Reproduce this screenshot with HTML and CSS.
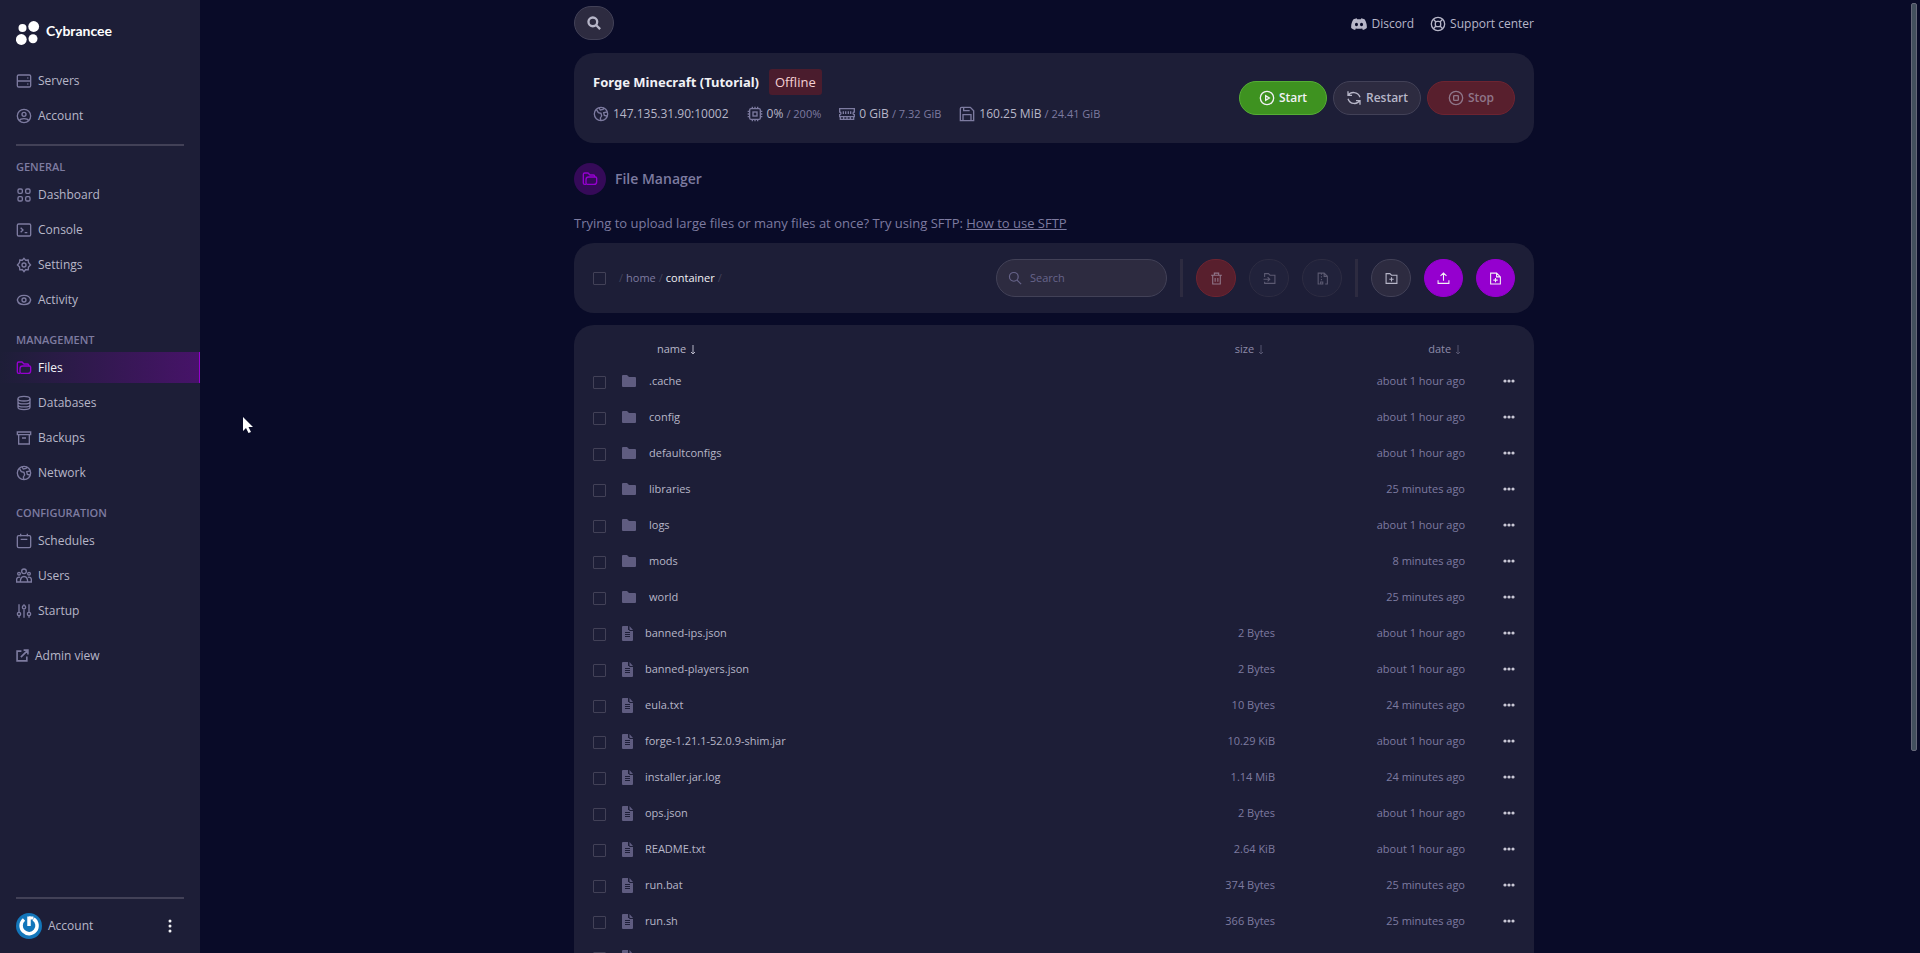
FILE: index.html
```html
<!DOCTYPE html>
<html lang="en">
<head>
<meta charset="utf-8">
<title>File Manager - Cybrancee</title>
<link rel="stylesheet" href="styles.css">
</head>
<body>
<svg class="sprite" aria-hidden="true">
  <symbol id="i-servers" viewBox="0 0 24 24"><rect x="2" y="3" width="20" height="18" rx="2"/><path d="M2 12h20M17 7.500h1.500M17 16.500h1.500"/></symbol>
  <symbol id="i-account" viewBox="0 0 24 24"><circle cx="12" cy="12" r="10"/><circle cx="12" cy="9.500" r="3"/><path d="M5 19c2-4 12-4 14 0"/></symbol>
  <symbol id="i-dashboard" viewBox="0 0 24 24"><rect x="3" y="3" width="6.500" height="6.500" rx="2"/><rect x="14.500" y="3" width="6.500" height="6.500" rx="2"/><rect x="3" y="14.500" width="6.500" height="6.500" rx="2"/><rect x="14.500" y="14.500" width="6.500" height="6.500" rx="2"/></symbol>
  <symbol id="i-console" viewBox="0 0 24 24"><rect x="2" y="3" width="20" height="18" rx="2"/><path d="M7 8.500l3.500 3.500L7 15.500M13 16h4"/></symbol>
  <symbol id="i-settings" viewBox="0 0 24 24"><path d="M12 2l2.500 2.800 3.800-.3.400 3.800L21.800 12l-3.100 3.200-.4 4-3.800-.4L12 22l-2.500-3.200-3.800.4-.4-4L2.200 12l3.100-3.700.4-3.800 3.800.3z"/><circle cx="12" cy="12" r="3"/></symbol>
  <symbol id="i-eye" viewBox="0 0 24 24"><path d="M2 12c2-9.300 18-9.300 20 0-2 9.300-18 9.300-20 0z"/><circle cx="12" cy="12" r="3"/></symbol>
  <symbol id="i-folders" viewBox="0 0 24 24"><path d="M6 20H4a2 2 0 0 1-2-2V5a2 2 0 0 1 2-2h5l3 3h5a2 2 0 0 1 2 2v1"/><path d="M6 18v-5a4 4 0 0 1 4-4h10a2 2 0 0 1 2 2v5a4 4 0 0 1-4 4H8a2 2 0 0 1-2-2z"/></symbol>
  <symbol id="i-database" viewBox="0 0 24 24"><ellipse cx="12" cy="5.500" rx="9" ry="3.500"/><path d="M3 5.500v13c0 4.500 18 4.500 18 0v-13M3 10c0 4.500 18 4.500 18 0M3 14.500c0 4.500 18 4.500 18 0"/></symbol>
  <symbol id="i-archive" viewBox="0 0 24 24"><path d="M2 3h20v4H2zM4 7v14h16V7M9 12h6"/></symbol>
  <symbol id="i-globe" viewBox="0 0 24 24"><circle cx="12" cy="12" r="10"/><path d="M5 5l3 5 4 1 1 4-2 3 1 4M9 3l2 3 4-1 2-2M21 9l-5 1 1 4 4 1"/></symbol>
  <symbol id="i-calendar" viewBox="0 0 24 24"><rect x="2" y="4" width="20" height="18" rx="2"/><path d="M7 1v4M17 1v4M7 9.500h10"/></symbol>
  <symbol id="i-users" viewBox="0 0 24 24"><circle cx="12" cy="5" r="3.500"/><circle cx="4.500" cy="8.500" r="2"/><circle cx="19.500" cy="8.500" r="2"/><path d="M6.500 21c0-11 11-11 11 0zM6.500 21H1v-4c0-2 2-4 5-3M17.500 21H23v-4c0-2-2-4-5-3"/></symbol>
  <symbol id="i-sliders" viewBox="0 0 24 24"><path d="M4.500 2v12M4.500 19v3M12 10v12M19.500 2v12M19.500 19v3M12 2v2"/><circle cx="4.500" cy="16.500" r="2.500"/><circle cx="12" cy="6.500" r="2.500"/><circle cx="19.500" cy="16.500" r="2.500"/></symbol>
  <symbol id="i-external" viewBox="0 0 24 24"><path d="M10 4H2v18h18v-8M9 15L21 3M14 2h8v8" stroke-width="3"/></symbol>
  <symbol id="i-search" viewBox="0 0 24 24"><circle cx="10" cy="10" r="7.500"/><path d="M15.500 15.500L22.500 22.500"/></symbol>
  <symbol id="i-discord" viewBox="0 0 24 24"><path fill="currentColor" stroke="none" fill-rule="evenodd" d="M8.500 3.500l.8 1.500c1.800-.3 3.600-.3 5.400 0l.8-1.500c1.700.3 3.300.8 4.800 1.500 2.700 4 3.800 8.500 3.400 13-1.800 1.400-3.700 2.300-5.800 3l-1.300-2.200 1.700-.9c-4 1.700-8.600 1.700-12.600 0l1.700.9L6.100 21c-2.100-.7-4-1.600-5.800-3-.4-4.500.7-9 3.400-13 1.500-.7 3.100-1.200 4.800-1.500zM8.200 10.200a2.300 2.500 0 1 0 0 5 2.300 2.500 0 0 0 0-5zm7.600 0a2.300 2.500 0 1 0 0 5 2.300 2.500 0 0 0 0-5z"/></symbol>
  <symbol id="i-support" viewBox="0 0 24 24"><circle cx="12" cy="12" r="10"/><rect x="8" y="8" width="8" height="8" rx="3"/><path d="M5 5l4 4M19 5l-4 4M5 19l4-4M19 19l-4-4"/></symbol>
  <symbol id="i-cpu" viewBox="0 0 24 24"><rect x="4" y="4" width="16" height="16" rx="2"/><rect x="9" y="9" width="6" height="6"/><path d="M8 1v3M12 1v3M16 1v3M8 20v3M12 20v3M16 20v3M1 8h3M1 12h3M1 16h3M20 8h3M20 12h3M20 16h3"/></symbol>
  <symbol id="i-ram" viewBox="0 0 24 24"><path d="M1 4h22v5a2 2 0 0 0 0 4v3H1v-3a2 2 0 0 0 0-4zM2 16v4h20v-4M6.500 8v4M10 8v4M14 8v4M17.500 8v4M7 17v3M12 17v3M17 17v3"/></symbol>
  <symbol id="i-disk" viewBox="0 0 24 24"><path d="M4 2h13l5 5v15H2V4a2 2 0 0 1 2-2zM7 2v5h9M6 22v-9h12v9"/></symbol>
  <symbol id="i-play" viewBox="0 0 24 24"><circle cx="12" cy="12" r="10"/><path d="M10 8.500v7l5.500-3.500z"/></symbol>
  <symbol id="i-restart" viewBox="0 0 24 24"><path d="M3 2v6h6M3.500 8c3.500-6 14.500-6 17.500 3M21 22v-6h-6M20.500 16C17 22 6 22 3 13"/></symbol>
  <symbol id="i-stop" viewBox="0 0 24 24"><circle cx="12" cy="12" r="10"/><rect x="8.500" y="8.500" width="7" height="7" rx="1"/></symbol>
  <symbol id="i-trash" viewBox="0 0 24 24"><path d="M2 6h20M8 6V2h8v4M5 6v16h14V6M9.500 11v7M14.500 11v7"/></symbol>
  <symbol id="i-move" viewBox="0 0 24 24"><path d="M3 9V3h7l3 3h9v15H3v-3M1 13.500h11M8.500 9.500l4 4-4 4"/></symbol>
  <symbol id="i-zip" viewBox="0 0 24 24"><path d="M7 22H4V2h11l6 6v14h-4M15 2v6h6M10 3v2M10 8v2M10 13v2M8.500 22v-3.500h4V22z"/></symbol>
  <symbol id="i-newfolder" viewBox="0 0 24 24"><path d="M2 3h7l3 3h10v15H2zM12 9.500v8M8 13.500h8"/></symbol>
  <symbol id="i-upload" viewBox="0 0 24 24"><path d="M12 16V2M6.500 7L12 2l5.500 5M2 15v6h20v-6"/></symbol>
  <symbol id="i-newfile" viewBox="0 0 24 24"><path d="M3 2h11l7 7v13H3zM14 2v7h7M12 11v8M8 15h8"/></symbol>
  <symbol id="i-folder" viewBox="0 0 14 12"><path fill="currentColor" stroke="none" d="M1 0h4l2 2h6a1 1 0 0 1 1 1v8a1 1 0 0 1-1 1H1a1 1 0 0 1-1-1V1a1 1 0 0 1 1-1z"/></symbol>
  <symbol id="i-file" viewBox="0 0 11 15"><path fill="currentColor" stroke="none" d="M1 0h5v4h1a1 1 0 0 0 1 1h3v9a1 1 0 0 1-1 1H1a1 1 0 0 1-1-1V1a1 1 0 0 1 1-1zM7.500 0L11 4H8.500a1 1 0 0 1-1-1z"/><path class="file-lines" d="M3 6.500h5M3 8.500h5M3 10.500h5"/></symbol>
  <symbol id="i-down" viewBox="0 0 6 10"><path d="M3 0v9M1 7l2 2 2-2" stroke-width="1"/></symbol>
  <symbol id="i-dots" viewBox="0 0 12 4"><g fill="currentColor" stroke="none"><circle cx="2" cy="2" r="1.600"/><circle cx="6" cy="2" r="1.600"/><circle cx="10" cy="2" r="1.600"/></g></symbol>
</svg>

<div class="app">
  <aside class="sidebar">
    <div class="brand">
      <svg class="brand-mark" viewBox="0 0 24 24" aria-hidden="true"><circle cx="6.500" cy="7" r="4"/><circle cx="17.700" cy="5.500" r="5.400"/><circle cx="5.300" cy="18.500" r="5.400"/><circle cx="17" cy="17.700" r="4.500"/></svg>
      <span>Cybrancee</span>
    </div>
    <nav class="nav">
      <a href="#"><svg class="icon"><use href="#i-servers"/></svg>Servers</a>
      <a href="#"><svg class="icon"><use href="#i-account"/></svg>Account</a>
    </nav>
    <hr class="rule">
    <nav class="nav nav-group">
      <h2>GENERAL</h2>
      <a href="#"><svg class="icon"><use href="#i-dashboard"/></svg>Dashboard</a>
      <a href="#"><svg class="icon"><use href="#i-console"/></svg>Console</a>
      <a href="#"><svg class="icon"><use href="#i-settings"/></svg>Settings</a>
      <a href="#"><svg class="icon"><use href="#i-eye"/></svg>Activity</a>
    </nav>
    <nav class="nav nav-group">
      <h2>MANAGEMENT</h2>
      <a href="#" class="active"><svg class="icon"><use href="#i-folders"/></svg>Files</a>
      <a href="#"><svg class="icon"><use href="#i-database"/></svg>Databases</a>
      <a href="#"><svg class="icon"><use href="#i-archive"/></svg>Backups</a>
      <a href="#"><svg class="icon"><use href="#i-globe"/></svg>Network</a>
    </nav>
    <nav class="nav nav-group">
      <h2>CONFIGURATION</h2>
      <a href="#"><svg class="icon"><use href="#i-calendar"/></svg>Schedules</a>
      <a href="#"><svg class="icon"><use href="#i-users"/></svg>Users</a>
      <a href="#"><svg class="icon"><use href="#i-sliders"/></svg>Startup</a>
    </nav>
    <nav class="nav nav-admin">
      <a href="#"><svg class="icon"><use href="#i-external"/></svg>Admin view</a>
    </nav>
    <div class="sidebar-foot">
      <hr class="rule">
      <div class="profile">
        <svg class="avatar" viewBox="0 0 26 26" aria-hidden="true"><circle cx="13" cy="13" r="13" fill="#1376ba"/><path d="M8 6.500a8 8 0 1 0 9.500-.5" fill="none" stroke="#fff" stroke-width="3.500"/><path d="M13 3.500V13" fill="none" stroke="#fff" stroke-width="3.500"/><path d="M13 5h4.500" stroke="#fff" stroke-width="3"/></svg>
        <span>Account</span>
        <button class="kebab" type="button" aria-label="Account menu"><svg viewBox="0 0 4 14"><circle cx="2" cy="2" r="1.500"/><circle cx="2" cy="7" r="1.500"/><circle cx="2" cy="12" r="1.500"/></svg></button>
      </div>
    </div>
  </aside>

  <main class="main">
    <div class="content">
      <header class="topbar">
        <button class="btn btn-search" type="button" aria-label="Search"><svg class="icon bold"><use href="#i-search"/></svg></button>
        <div class="links">
          <a href="#"><svg class="icon"><use href="#i-discord"/></svg>Discord</a>
          <a href="#"><svg class="icon"><use href="#i-support"/></svg>Support center</a>
        </div>
      </header>

      <section class="card server">
        <div class="server-info">
          <div class="server-title"><h1>Forge Minecraft (Tutorial)</h1><span class="badge">Offline</span></div>
          <ul class="stats">
            <li><svg class="icon"><use href="#i-globe"/></svg><span>147.135.31.90:10002</span></li>
            <li><svg class="icon"><use href="#i-cpu"/></svg><span>0% <small>/ 200%</small></span></li>
            <li><svg class="icon"><use href="#i-ram"/></svg><span>0 GiB <small>/ 7.32 GiB</small></span></li>
            <li><svg class="icon"><use href="#i-disk"/></svg><span>160.25 MiB <small>/ 24.41 GiB</small></span></li>
          </ul>
        </div>
        <div class="power">
          <button class="btn btn-start" type="button"><svg class="icon"><use href="#i-play"/></svg>Start</button>
          <button class="btn" type="button"><svg class="icon"><use href="#i-restart"/></svg>Restart</button>
          <button class="btn btn-danger" type="button" disabled><svg class="icon"><use href="#i-stop"/></svg>Stop</button>
        </div>
      </section>

      <div class="page-title">
        <span class="page-icon"><svg class="icon"><use href="#i-folders"/></svg></span>
        <h2>File Manager</h2>
      </div>
      <p class="hint">Trying to upload large files or many files at once? Try using SFTP: <a href="#">How to use SFTP</a></p>

      <section class="card toolbar">
        <input class="check" type="checkbox" aria-label="Select all">
        <div class="crumbs"><i>/</i><a href="#">home</a><i>/</i><b>container</b><i>/</i></div>
        <label class="search"><svg class="icon"><use href="#i-search"/></svg><input type="text" placeholder="Search" aria-label="Search files"></label>
        <span class="bar"></span>
        <button class="btn round btn-danger" type="button" disabled aria-label="Delete"><svg class="icon"><use href="#i-trash"/></svg></button>
        <button class="btn round" type="button" disabled aria-label="Move"><svg class="icon"><use href="#i-move"/></svg></button>
        <button class="btn round" type="button" disabled aria-label="Archive"><svg class="icon"><use href="#i-zip"/></svg></button>
        <span class="bar"></span>
        <button class="btn round" type="button" aria-label="New folder"><svg class="icon"><use href="#i-newfolder"/></svg></button>
        <button class="btn round btn-primary" type="button" aria-label="Upload"><svg class="icon"><use href="#i-upload"/></svg></button>
        <button class="btn round btn-primary" type="button" aria-label="New file"><svg class="icon"><use href="#i-newfile"/></svg></button>
      </section>

      <section class="card files">
        <table>
          <thead>
            <tr><th class="c-check"></th><th class="c-name">name <svg class="arrow"><use href="#i-down"/></svg></th><th class="c-size">size <svg class="arrow"><use href="#i-down"/></svg></th><th class="c-date">date <svg class="arrow"><use href="#i-down"/></svg></th><th class="c-menu"></th></tr>
          </thead>
          <tbody>
            <tr><td><input class="check" type="checkbox" aria-label="Select .cache"></td><td><a href="#"><svg class="folder"><use href="#i-folder"/></svg>.cache</a></td><td></td><td>about 1 hour ago</td><td><button class="more" type="button" aria-label="Actions"><svg><use href="#i-dots"/></svg></button></td></tr>
            <tr><td><input class="check" type="checkbox" aria-label="Select config"></td><td><a href="#"><svg class="folder"><use href="#i-folder"/></svg>config</a></td><td></td><td>about 1 hour ago</td><td><button class="more" type="button" aria-label="Actions"><svg><use href="#i-dots"/></svg></button></td></tr>
            <tr><td><input class="check" type="checkbox" aria-label="Select defaultconfigs"></td><td><a href="#"><svg class="folder"><use href="#i-folder"/></svg>defaultconfigs</a></td><td></td><td>about 1 hour ago</td><td><button class="more" type="button" aria-label="Actions"><svg><use href="#i-dots"/></svg></button></td></tr>
            <tr><td><input class="check" type="checkbox" aria-label="Select libraries"></td><td><a href="#"><svg class="folder"><use href="#i-folder"/></svg>libraries</a></td><td></td><td>25 minutes ago</td><td><button class="more" type="button" aria-label="Actions"><svg><use href="#i-dots"/></svg></button></td></tr>
            <tr><td><input class="check" type="checkbox" aria-label="Select logs"></td><td><a href="#"><svg class="folder"><use href="#i-folder"/></svg>logs</a></td><td></td><td>about 1 hour ago</td><td><button class="more" type="button" aria-label="Actions"><svg><use href="#i-dots"/></svg></button></td></tr>
            <tr><td><input class="check" type="checkbox" aria-label="Select mods"></td><td><a href="#"><svg class="folder"><use href="#i-folder"/></svg>mods</a></td><td></td><td>8 minutes ago</td><td><button class="more" type="button" aria-label="Actions"><svg><use href="#i-dots"/></svg></button></td></tr>
            <tr><td><input class="check" type="checkbox" aria-label="Select world"></td><td><a href="#"><svg class="folder"><use href="#i-folder"/></svg>world</a></td><td></td><td>25 minutes ago</td><td><button class="more" type="button" aria-label="Actions"><svg><use href="#i-dots"/></svg></button></td></tr>
            <tr><td><input class="check" type="checkbox" aria-label="Select banned-ips.json"></td><td><a href="#"><svg class="file"><use href="#i-file"/></svg>banned-ips.json</a></td><td>2 Bytes</td><td>about 1 hour ago</td><td><button class="more" type="button" aria-label="Actions"><svg><use href="#i-dots"/></svg></button></td></tr>
            <tr><td><input class="check" type="checkbox" aria-label="Select banned-players.json"></td><td><a href="#"><svg class="file"><use href="#i-file"/></svg>banned-players.json</a></td><td>2 Bytes</td><td>about 1 hour ago</td><td><button class="more" type="button" aria-label="Actions"><svg><use href="#i-dots"/></svg></button></td></tr>
            <tr><td><input class="check" type="checkbox" aria-label="Select eula.txt"></td><td><a href="#"><svg class="file"><use href="#i-file"/></svg>eula.txt</a></td><td>10 Bytes</td><td>24 minutes ago</td><td><button class="more" type="button" aria-label="Actions"><svg><use href="#i-dots"/></svg></button></td></tr>
            <tr><td><input class="check" type="checkbox" aria-label="Select forge-1.21.1-52.0.9-shim.jar"></td><td><a href="#"><svg class="file"><use href="#i-file"/></svg>forge-1.21.1-52.0.9-shim.jar</a></td><td>10.29 KiB</td><td>about 1 hour ago</td><td><button class="more" type="button" aria-label="Actions"><svg><use href="#i-dots"/></svg></button></td></tr>
            <tr><td><input class="check" type="checkbox" aria-label="Select installer.jar.log"></td><td><a href="#"><svg class="file"><use href="#i-file"/></svg>installer.jar.log</a></td><td>1.14 MiB</td><td>24 minutes ago</td><td><button class="more" type="button" aria-label="Actions"><svg><use href="#i-dots"/></svg></button></td></tr>
            <tr><td><input class="check" type="checkbox" aria-label="Select ops.json"></td><td><a href="#"><svg class="file"><use href="#i-file"/></svg>ops.json</a></td><td>2 Bytes</td><td>about 1 hour ago</td><td><button class="more" type="button" aria-label="Actions"><svg><use href="#i-dots"/></svg></button></td></tr>
            <tr><td><input class="check" type="checkbox" aria-label="Select README.txt"></td><td><a href="#"><svg class="file"><use href="#i-file"/></svg>README.txt</a></td><td>2.64 KiB</td><td>about 1 hour ago</td><td><button class="more" type="button" aria-label="Actions"><svg><use href="#i-dots"/></svg></button></td></tr>
            <tr><td><input class="check" type="checkbox" aria-label="Select run.bat"></td><td><a href="#"><svg class="file"><use href="#i-file"/></svg>run.bat</a></td><td>374 Bytes</td><td>25 minutes ago</td><td><button class="more" type="button" aria-label="Actions"><svg><use href="#i-dots"/></svg></button></td></tr>
            <tr><td><input class="check" type="checkbox" aria-label="Select run.sh"></td><td><a href="#"><svg class="file"><use href="#i-file"/></svg>run.sh</a></td><td>366 Bytes</td><td>25 minutes ago</td><td><button class="more" type="button" aria-label="Actions"><svg><use href="#i-dots"/></svg></button></td></tr>
            <tr><td><input class="check" type="checkbox" aria-label="Select file"></td><td><a href="#"><svg class="file"><use href="#i-file"/></svg></a></td><td></td><td></td><td></td></tr>
          </tbody>
        </table>
      </section>
    </div>
    <div class="scroll-thumb"></div>
  </main>
  <svg class="pointer" viewBox="0 0 10 16" aria-hidden="true"><path d="M0 0v14l3-3 2.500 5 2.500-1-2.500-5H10z" fill="#fff"/></svg>
</div>
</body>
</html>
```
FILE: styles.css
```css
:root {
  --page: #090b28;
  --panel: #1d1e37;
  --raised: #2d2b40;
  --line: #424157;
  --muted: #7d7ba0;
  --text: #b7b6c8;
  --bright: #f1f1f5;
  --accent: #9500cf;
  --danger: #581f2d;
}

* { box-sizing: border-box; }

body {
  margin: 0;
  background: var(--page);
  color: var(--text);
  font: 12px/16px "Open Sans", "Noto Sans", sans-serif;
}

h1, h2, p, ul { margin: 0; padding: 0; }
a { color: inherit; text-decoration: none; }
button, input { font: inherit; color: inherit; }
button { padding: 0; border: 0; background: none; }

.sprite { display: none; }

.icon {
  width: 16px;
  height: 16px;
  flex: none;
  fill: none;
  stroke: currentColor;
  stroke-width: 2;
}
.icon.bold { stroke-width: 4; }

.app { display: flex; height: 100vh; position: relative; overflow: hidden; }

/* Sidebar */
.sidebar {
  width: 200px;
  flex: none;
  display: flex;
  flex-direction: column;
  background: var(--panel);
}
.brand {
  display: flex;
  align-items: center;
  gap: 6px;
  height: 65px;
  padding: 0 16px;
  color: #fff;
  font: 700 14px/20px Lato, sans-serif;
}
.brand span { padding-bottom: 4px; }
.brand-mark { width: 24px; height: 24px; fill: #fff; }

.rule { width: auto; height: 2px; margin: 0 16px; border: 0; background: var(--line); }

.nav { display: flex; flex-direction: column; gap: 4px; }
.nav a {
  display: flex;
  align-items: center;
  gap: 6px;
  height: 31px;
  padding: 0 16px;
}
.nav .icon { color: var(--muted); }
.nav + .rule { margin-top: 13px; }
.nav-group h2 {
  padding: 0 16px;
  color: var(--muted);
  font-size: 11px;
  font-weight: 600;
  line-height: 16px;
}
.nav-group { margin-top: 17px; }
.rule + .nav-group { margin-top: 13px; }
.nav .active {
  color: var(--bright);
  background: linear-gradient(90deg, transparent, #471369);
  border-right: 1px solid var(--accent);
}
.nav .active .icon { color: var(--accent); }
.nav-admin { margin-top: 14px; }
.nav-admin .icon { width: 13px; height: 13px; }

.sidebar-foot { margin-top: auto; }
.profile {
  display: flex;
  align-items: center;
  gap: 6px;
  padding: 14px 28px 14px 16px;
}
.avatar { width: 26px; height: 26px; }
.kebab { margin-left: auto; }
.kebab svg { display: block; width: 4px; height: 14px; fill: var(--bright); }

/* Main column */
.main { flex: 1; position: relative; padding-right: 12px; overflow: hidden; }
.content { max-width: 960px; margin: 0 auto; }

.scroll-thumb {
  position: absolute;
  top: 3px;
  right: 3px;
  width: 6px;
  height: 748px;
  border: 1px solid #66687a;
  border-radius: 2px;
  background: #43505e;
}
.pointer { position: absolute; left: 243px; top: 417px; width: 10px; height: 16px; }

.topbar {
  display: flex;
  align-items: center;
  justify-content: space-between;
  padding: 6px 0 13px;
}
.links { display: flex; gap: 16px; padding-top: 2px; }
.links a { display: flex; align-items: center; gap: 4px; }

.btn {
  display: flex;
  align-items: center;
  justify-content: center;
  gap: 4px;
  width: 88px;
  height: 34px;
  border: 1px solid var(--line);
  border-radius: 20px;
  background: var(--raised);
  font-weight: 600;
}
.btn-search { width: 40px; }
.btn-search .icon { width: 14px; height: 14px; }
.btn-start { background: #3e9220; border-color: #55ad35; color: var(--bright); }
.btn-danger, .btn-danger:disabled { background: var(--danger); border-color: #6d2431; color: #8f7689; }
.btn-primary { background: var(--accent); border-color: var(--accent); color: var(--bright); }
.round { width: 40px; height: 38px; }
.round.btn-primary { width: 39px; }
.round .icon { width: 13px; height: 13px; }
.round:disabled:not(.btn-danger) { background: #21223b; border-color: #2d2c42; color: #5c5a72; }

.card { background: var(--panel); border-radius: 20px; }

.server {
  display: flex;
  align-items: center;
  justify-content: space-between;
  height: 90px;
  padding: 0 19px;
}
.server-info { padding-bottom: 5px; }
.server-title { display: flex; align-items: center; gap: 10px; }
.server-title h1 { color: var(--bright); font-family: "Noto Sans", sans-serif; font-size: 13px; font-weight: 700; line-height: 20px; }
.badge {
  padding: 5px 6px;
  border-radius: 3px;
  background: #4a1c2d;
  color: #f5d0d3;
  font-size: 13px;
}
.stats { display: flex; gap: 18px; margin-top: 11px; list-style: none; }
.stats li { display: flex; align-items: center; gap: 4px; }
.stats .icon { color: var(--muted); }
.stats small { color: var(--muted); font-size: 11px; }
.power { display: flex; gap: 6px; }

.page-title { display: flex; align-items: center; gap: 9px; margin-top: 20px; color: var(--muted); }
.page-title h2 { font-size: 14px; font-weight: 600; line-height: 20px; }
.page-icon {
  display: grid;
  place-items: center;
  width: 32px;
  height: 32px;
  border-radius: 50%;
  background: #350a58;
  color: var(--accent);
}
.hint { margin: 20px 0 12px; color: var(--muted); font-size: 13px; font-weight: 500; }
.hint a { text-decoration: underline; }

.toolbar { display: flex; align-items: center; gap: 13px; height: 70px; padding: 0 19px; }

.check {
  appearance: none;
  display: block;
  width: 13px;
  height: 13px;
  margin: 0;
  border: 1px solid var(--line);
  border-radius: 1px;
}
.crumbs { display: flex; gap: 3px; margin-right: auto; font-size: 11px; color: var(--muted); }
.crumbs i { color: var(--line); font-style: normal; }
.crumbs b { color: var(--bright); font-weight: 400; }

.search {
  display: flex;
  align-items: center;
  gap: 8px;
  width: 171px;
  height: 38px;
  padding: 0 11px;
  border: 1px solid var(--line);
  border-radius: 19px;
  background: var(--raised);
  color: #67648a;
}
.search .icon { width: 14px; height: 14px; }
.search input { width: 100%; min-width: 0; padding: 0; border: 0; outline: 0; background: none; font-size: 11px; }
.search input::placeholder { color: #67648a; }
.bar { width: 3px; height: 38px; background: var(--raised); }

.files { margin-top: 12px; padding: 10px 19px; font-size: 11px; }
.files table { width: 100%; border-collapse: collapse; table-layout: fixed; }
.files th { height: 28px; padding: 0; font-weight: 400; text-align: right; color: #8d8ba8; }
.files td { height: 36px; padding: 0; text-align: right; color: var(--muted); }
.files .check { margin-top: 2px; }
.files .c-check { width: 29px; }
.files .c-name { padding-left: 35px; text-align: left; color: var(--text); }
.files .c-size { width: 150px; padding-right: 11px; }
.files .c-date { width: 190px; padding-right: 4px; }
.files .c-menu { width: 50px; }
.files td a { display: flex; align-items: center; color: var(--text); }
.files td:nth-child(2) { text-align: left; }
.arrow { width: 6px; height: 10px; margin-left: 1px; vertical-align: -2px; fill: none; stroke: currentColor; }
.c-size .arrow, .c-date .arrow { opacity: 0.5; }
.folder { width: 14px; height: 12px; margin-right: 13px; color: #5f5c80; }
.file { width: 11px; height: 15px; margin-right: 12px; color: #5f5c80; }
.file-lines { stroke: var(--panel); stroke-width: 1; }
.more { display: block; margin-left: auto; color: #c9c8d6; }
.more svg { display: block; width: 12px; height: 4px; }
```
